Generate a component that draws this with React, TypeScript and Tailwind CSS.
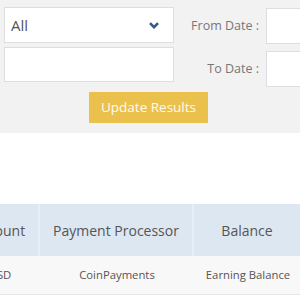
import React from "react";

export default function App() {
  const font = { fontFamily: '"Open Sans", "Noto Sans", sans-serif' };
  return (
    <div className="w-[300px] h-[300px] overflow-hidden bg-white" style={font}>
      <div className="h-[133px] bg-[#f2f2f2] pt-[7px]">
        <div className="flex h-[80px] items-start">
          <div className="ml-[4px] w-[170px] flex flex-col gap-[4px]">
            <div className="h-[36px] bg-white border border-[#dedede] flex items-center justify-between pl-[6px] pr-[14px]">
              <span className="text-[15px] text-[#555]">All</span>
              <svg width="10" height="7" viewBox="0 0 10 7">
                <path d="M1 1.2 L5 5.2 L9 1.2" fill="none" stroke="#2f5b8c" strokeWidth="2.6" />
              </svg>
            </div>
            <div className="h-[35px] bg-white border border-[#dedede]" />
          </div>
          <div className="ml-auto flex flex-col gap-[7px] mt-[1px]">
            <div className="flex items-center h-[36px]">
              <span className="w-[80px] text-right text-[12.5px] text-[#777] pr-[7px] whitespace-nowrap">From Date :</span>
              <div className="w-[34px] h-[36px] bg-white border border-[#dedede] border-r-0" />
            </div>
            <div className="flex items-center h-[36px]">
              <span className="w-[80px] text-right text-[12.5px] text-[#777] pr-[7px] whitespace-nowrap">To Date :</span>
              <div className="w-[34px] h-[36px] bg-white border border-[#dedede] border-r-0" />
            </div>
          </div>
        </div>
        <div className="mt-[5px] ml-[89px] w-[119px] h-[31px] bg-[#e9c14c] flex items-center justify-center text-[#fffaf0] text-[13.5px]">
          Update Results
        </div>
      </div>
      <div className="mt-[71px] overflow-hidden">
        <div className="flex ml-[-40px] w-max h-[52px] bg-[#dde7f2] text-[14px] text-[#555]">
          <div className="w-[80px] border-r-2 border-[#e8eef6] flex items-center justify-center">Amount</div>
          <div className="w-[154px] border-r-2 border-[#e8eef6] flex items-center justify-center">Payment Processor</div>
          <div className="w-[108px] border-r-2 border-[#e8eef6] flex items-center justify-center">Balance</div>
          <div className="w-[120px] flex items-center justify-center">Status</div>
        </div>
        <div className="flex ml-[-40px] w-max h-[39px] bg-[#f8f8f8] border-b border-[#e6e6e6] text-[11.3px] text-[#555]">
          <div className="w-[80px] flex items-center justify-center">USD</div>
          <div className="w-[154px] flex items-center justify-center">CoinPayments</div>
          <div className="w-[108px] flex items-center justify-center">Earning Balance</div>
          <div className="w-[120px] flex items-center justify-center">Pending</div>
        </div>
      </div>
    </div>
  );
}
